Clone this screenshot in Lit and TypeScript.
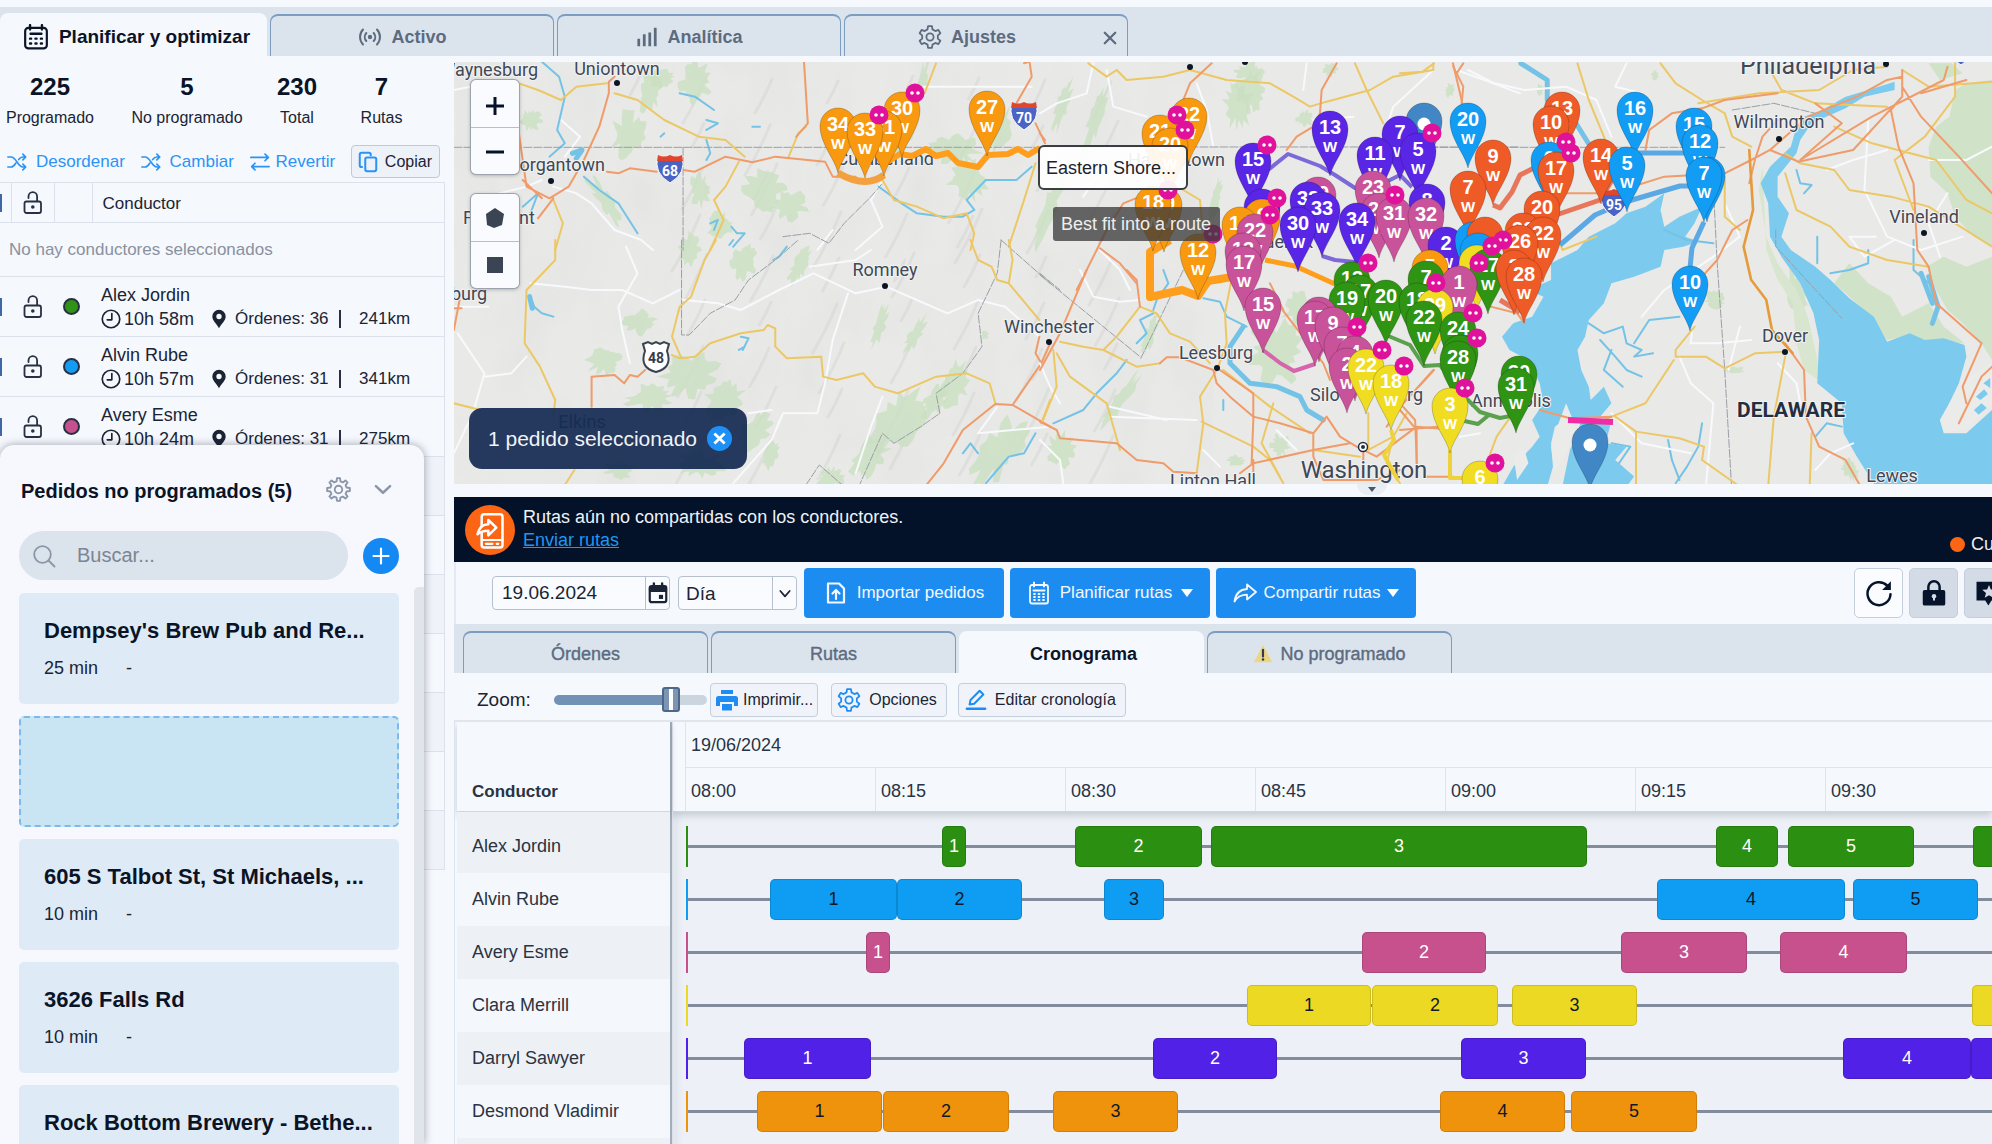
import { LitElement, html, css, svg, nothing } from "lit";
import { customElement, state } from "lit/decorators.js";
import { classMap } from "lit/directives/class-map.js";
import { styleMap } from "lit/directives/style-map.js";

/* ---------- icons ---------- */

const gearPath = (teeth: number, outer: number, inner: number) => {
  const pts: string[] = [];
  const step = (Math.PI * 2) / teeth;
  for (let i = 0; i < teeth; i++) {
    const a = i * step - Math.PI / 2;
    const put = (r: number, d: number) =>
      pts.push(`${(12 + r * Math.cos(a + d * step)).toFixed(2)} ${(12 + r * Math.sin(a + d * step)).toFixed(2)}`);
    put(inner, -0.3);
    put(outer, -0.17);
    put(outer, 0.17);
    put(inner, 0.3);
  }
  return `M${pts.join("L")}Z`;
};

const icon = (size: number, body: unknown, cls = "") =>
  html`<svg class="icon ${cls}" width=${size} height=${size} viewBox="0 0 24 24" aria-hidden="true">${body}</svg>`;

const gear = (size: number, teeth = 6) =>
  icon(size, svg`<path d=${gearPath(teeth, 11, 8)}/><circle cx="12" cy="12" r="3.6"/>`);
const calcIcon = icon(26, svg`<rect x="2" y="3.500" width="20" height="19" rx="3" stroke-width="2"/><path d="M6.500 1v4M17.500 1v4M7 9h10" stroke-width="2.200"/><path d="M6.500 13.500h1M11.500 13.500h1M16.500 13.500h1M6.500 18h1M11.500 18h1M16.500 18h1" stroke-width="2.200"/>`);
const liveIcon = icon(24, svg`<circle cx="12" cy="12" r="2.200" fill="currentColor" stroke="none"/><path d="M8.300 8a6 6 0 0 0 0 8M15.700 8a6 6 0 0 1 0 8M5 4.500a11 11 0 0 0 0 15M19 4.500a11 11 0 0 1 0 15" stroke-width="2"/>`);
const barsIcon = icon(22, svg`<path d="M3 22V14M9 22V9M15 22V7M21 22V2" stroke-width="3" stroke-linecap="butt"/>`);
const shuffleIcon = icon(20, svg`<path d="M1 6h4c6 0 8 12 14 12h3M1 18h4c2.500 0 4-2 5.500-4.500M14 9c1.500-2 3-3 5-3h3M19 2.500 22.500 6 19 9.500M19 14.500l3.500 3.500-3.500 3.500" stroke-width="2"/>`);
const swapIcon = icon(20, svg`<path d="M1 6.500h21M18 2.500l4 4-4 4M23 17.500H2M6 13.500l-4 4 4 4" stroke-width="2"/>`);
const copyIcon = icon(22, svg`<rect x="9" y="7" width="12" height="15" rx="2" stroke-width="2.200"/><path d="M5.500 17.500H5a2 2 0 0 1-2-2V4a2 2 0 0 1 2-2h8a2 2 0 0 1 2 2v.5" stroke-width="2.200"/>`);
const lockIcon = icon(24, svg`<rect x="3.500" y="10.500" width="16.500" height="11.500" rx="2"/><path d="M7.500 7V5.500a4.300 4.300 0 0 1 8.600 0V10"/><circle cx="11.800" cy="16" r="1.800" fill="currentColor" stroke="none"/>`);
const clockIcon = icon(20, svg`<circle cx="12" cy="12" r="10.500" stroke-width="2"/><path d="M13 5.500v7.500H7.500" stroke-width="2"/>`);
const pinIcon = icon(20, svg`<path d="M12 1a8 8 0 0 0-8 8c0 5 5 8.500 8 14 3-5.500 8-9 8-14a8 8 0 0 0-8-8zm0 4.800a3.200 3.200 0 1 1 0 6.400 3.200 3.200 0 0 1 0-6.400z" fill="currentColor" stroke="none"/>`);
const chevron = icon(20, svg`<path d="M3.500 8.500 12 16.500l8.500-8" stroke-width="3"/>`);
const searchIcon = icon(24, svg`<circle cx="10.500" cy="10.500" r="8.300"/><path d="m16.500 16.500 6 6"/>`);
const plusIcon = icon(20, svg`<path d="M12 3v18M3 12h18" stroke-width="2.600"/>`);
const closeIcon = icon(18, svg`<path d="m5 5 14 14M19 5 5 19" stroke-width="3"/>`);
const importIcon = icon(24, svg`<path d="M4 2.500h11l5 5v14H4z" stroke-width="2.200"/><path d="M12 18V9M8.500 12.500 12 9l3.500 3.500" stroke-width="2.200"/>`);
const planIcon = icon(24, svg`<rect x="3" y="4" width="18" height="18.500" rx="2"/><path d="M7 1.500v4M17 1.500v4M6.500 9.500h11" stroke-width="2"/><path d="M7 13h1M11.500 13h1M16 13h1M7 16h1M11.500 16h1M16 16h1M7 19h1M11.500 19h1M16 19h1"/>`);
const shareIcon = icon(24, svg`<path d="M14 3.500 23 11l-9 7.500v-4.800c-6 0-9.500 1.800-12.500 6.800C2.500 13 6.500 8.500 14 8z"/>`);
const calendarIcon = icon(22, svg`<path d="M3 6.500a2 2 0 0 1 2-2h14a2 2 0 0 1 2 2V20a2 2 0 0 1-2 2H5a2 2 0 0 1-2-2z" stroke-width="2.400"/><path d="M3 5h18v5H3z" fill="currentColor"/><path d="M7.500 1.500v4M16.500 1.500v4" stroke-width="2.600"/><path d="M13 14h4.500v4.500H13z" fill="currentColor" stroke="none"/>`);
const refreshIcon = icon(30, svg`<path d="M18.500 6A9.200 9.200 0 1 0 21.200 13" stroke-width="2"/><path d="M21.500 2.500v7H14.500z" fill="currentColor" stroke="none"/>`);
const lockSolid = icon(30, svg`<path d="M7.500 10V7a4.500 4.500 0 0 1 9 0v3" stroke-width="2"/><rect x="3" y="9.500" width="18" height="12.500" rx="1.500" fill="currentColor" stroke="none"/><circle cx="12" cy="14.500" r="1.800" fill="#d3dbe6" stroke="none"/><path d="M11.200 15h1.600v3h-1.600z" fill="#d3dbe6" stroke="none"/>`);
const reviewIcon = icon(30, svg`<path d="M2 3h20v15h-8l-2.500 4L9 18H2z" fill="currentColor" stroke="none"/><path d="m12 5.500 1.500 3.600 3.900.3-3 2.500 1 3.800-3.400-2-3.400 2 1-3.800-3-2.500 3.900-.3z" fill="#d3dbe6" stroke="none"/>`);
const printIcon = icon(24, svg`<path d="M6 2h12v4H6zM3.500 8h17A2.500 2.500 0 0 1 23 10.500V18h-4v-4H5v4H1v-7.500A2.500 2.500 0 0 1 3.500 8zM7 16h10v6.500H7z" fill="currentColor" stroke="none"/>`);
const editIcon = icon(22, svg`<path d="m5 17 1-5L16 2l4 4L10 16z" stroke-width="2.200"/><path d="M2 21.500h20" stroke-width="2.600"/>`);
const warnIcon = icon(20, svg`<path d="M12 1 23 22H1z" fill="#ecd685" stroke="none"/><path d="M12 7v8" stroke="#333c4d" stroke-width="2.600"/><circle cx="12" cy="18.500" r="1.500" fill="#333c4d" stroke="none"/>`);
const phoneIcon = icon(40, svg`<rect x="7" y="2.500" width="12.500" height="20" rx="1.500" stroke-width="1.500"/><path d="M7 18h12.500M9.500 20.300h4M16 20.300h1" stroke-width="1.300"/><path d="M4.500 14.500c1-4 3-6 6.500-6V6l4.800 4.600L11 15.200v-2.700c-3 0-4.800.6-6.500 2z" stroke-width="1.500" fill="#fb6514"/>`);

/* ---------- data ---------- */

const C = {
  orange: "#f8990f", violet: "#5a26e6", pink: "#c9539a", green: "#2f9414",
  yellow: "#f0dc20", sky: "#129cf4", red: "#ef5b27", steel: "#4187c6",
};

/* [tip x, tip y, colour, label], painted from back to front */
type Pin = [number, number, string, string];
const pins: Pin[] = [
  [902, 157, C.orange, "30"], [884, 176, C.orange, "31"], [838, 173, C.orange, "34"], [865, 178, C.orange, "33"],
  [987, 156, C.orange, "27"], [1189, 163, C.orange, "22"], [1160, 180, C.orange, "21"], [1170, 193, C.orange, "20"],
  [1164, 252, C.orange, "19"], [1153, 251, C.orange, "18"], [1198, 299, C.orange, "12"],
  [1424, 168, C.steel, ""], [1330, 176, C.violet, "13"], [1400, 181, C.violet, "7"], [1375, 202, C.violet, "11"],
  [1418, 198, C.violet, "5"], [1253, 208, C.violet, "15"], [1262, 254, C.violet, ""], [1318, 242, C.pink, "29"],
  [1308, 247, C.violet, "32"], [1373, 236, C.pink, "23"], [1427, 249, C.violet, "8"],
  [1322, 257, C.violet, "33"], [1298, 272, C.violet, "30"], [1379, 258, C.pink, "26"], [1357, 268, C.violet, "34"],
  [1394, 262, C.pink, "31"], [1426, 263, C.pink, "32"],
  [1262, 264, C.orange, "6"], [1240, 272, C.orange, "14"], [1255, 279, C.pink, "22"], [1243, 298, C.pink, "13"],
  [1244, 311, C.pink, "17"], [1263, 353, C.pink, "15"],
  [1468, 168, C.sky, "20"], [1493, 205, C.red, "9"], [1468, 236, C.red, "7"],
  [1562, 157, C.red, "13"], [1551, 171, C.red, "10"], [1549, 207, C.sky, "6"], [1556, 217, C.red, "17"],
  [1601, 204, C.red, "14"], [1635, 157, C.sky, "16"], [1627, 212, C.sky, "5"],
  [1694, 173, C.sky, "15"], [1700, 190, C.sky, "12"], [1707, 222, C.sky, ""], [1704, 222, C.sky, "7"], [1690, 331, C.sky, "10"],
  [1446, 292, C.violet, "2"], [1430, 315, C.orange, "5"],
  [1473, 287, C.sky, ""], [1485, 282, C.red, ""], [1478, 298, C.sky, ""], [1477, 310, C.yellow, ""],
  [1542, 256, C.red, "20"], [1523, 278, C.red, "30"], [1543, 282, C.red, "22"], [1520, 290, C.red, "26"],
  [1488, 314, C.green, "17"], [1514, 315, C.red, "2"], [1524, 323, C.red, "28"],
  [1352, 327, C.green, "13"], [1360, 340, C.green, "17"], [1347, 347, C.green, "19"], [1386, 345, C.green, "20"],
  [1426, 326, C.green, "7"], [1417, 348, C.green, "18"], [1459, 331, C.pink, "1"], [1435, 354, C.yellow, "29"],
  [1424, 366, C.green, "22"], [1458, 377, C.green, "24"], [1460, 400, C.green, ""], [1458, 406, C.green, "28"],
  [1319, 362, C.pink, ""], [1315, 366, C.pink, "17"], [1333, 372, C.pink, "9"], [1342, 392, C.pink, "7"],
  [1355, 401, C.pink, "4"], [1347, 413, C.pink, "2"], [1366, 414, C.yellow, "22"], [1391, 430, C.yellow, "18"],
  [1519, 421, C.green, "30"], [1516, 433, C.green, "31"], [1450, 453, C.yellow, "3"], [1480, 526, C.yellow, "6"],
  [1590, 489, C.steel, ""],
];

const badges = [
  [915, 93], [879, 115], [1177, 115], [1185, 130], [1168, 190], [1267, 145], [1277, 198], [1270, 215],
  [1213, 234], [1432, 133], [1395, 195], [1368, 263], [1479, 263], [1436, 283], [1357, 327], [1382, 350],
  [1404, 366], [1473, 313], [1477, 338], [1465, 388], [1495, 463], [1566, 142], [1571, 153], [1503, 240], [1492, 246],
];

/* [x, baseline, name, anchor, size class] */
const places: [number, number, string, string, string][] = [
  [538, 76, "Waynesburg", "end", ""], [617, 75, "Uniontown", "middle", ""], [605, 171, "Morgantown", "end", ""],
  [463, 224, "Fairmont", "start", ""], [487, 300, "Clarksburg", "end", ""], [885, 276, "Romney", "middle", ""],
  [1049, 333, "Winchester", "middle", ""], [1216, 359, "Leesburg", "middle", ""], [1310, 401, "Silo", "start", ""],
  [1423, 401, "rg", "end", ""], [1471, 407, "Annapolis", "start", ""], [1364, 478, "Washington", "middle", "big"],
  [1213, 487, "Linton Hall", "middle", ""], [1808, 74, "Philadelphia", "middle", "mid"], [1779, 128, "Wilmington", "middle", ""],
  [1924, 223, "Vineland", "middle", ""], [1785, 342, "Dover", "middle", ""], [1791, 417, "DELAWARE", "middle", "state"],
  [1892, 482, "Lewes", "middle", ""], [582, 428, "Elkins", "middle", ""], [1225, 166, "Hagerstown", "end", ""],
  [934, 165, "Cumberland", "end", ""], [1313, 248, "Frederick", "end", ""],
];
const dots = [[617, 83], [551, 181], [885, 286], [1049, 342], [1217, 368], [1886, 64], [1779, 139], [1924, 233], [1785, 352], [1190, 67], [1245, 62]];

/* wooded patches: [cx, cy, rx, ry, lean] */
const woods: number[][] = [
  [530, 120, 12, 12, 0], [650, 90, 12, 24, 10], [695, 82, 18, 24, 0], [628, 135, 18, 26, 10], [662, 78, 16, 10, 0],
  [700, 190, 12, 18, 0], [765, 190, 24, 22, 0], [790, 205, 20, 16, 0], [720, 225, 16, 14, 0], [605, 200, 8, 34, -35],
  [690, 250, 12, 18, 0], [745, 262, 14, 20, 20], [800, 265, 9, 22, 25], [905, 130, 10, 30, 20], [920, 90, 6, 36, 15],
  [955, 150, 28, 16, 0], [968, 180, 22, 22, 0], [1000, 130, 12, 26, 20], [640, 322, 18, 14, 0], [605, 360, 20, 18, 0],
  [690, 375, 34, 24, -20], [650, 398, 28, 14, 0], [725, 400, 20, 26, 30], [755, 432, 14, 26, 30], [880, 325, 6, 26, 18],
  [915, 335, 7, 24, 30], [900, 420, 24, 44, 35], [870, 455, 16, 28, 35], [955, 385, 16, 28, 20], [935, 400, 12, 24, 30],
  [830, 478, 14, 12, 0], [1000, 450, 20, 42, 35], [1062, 105, 7, 32, 18], [1095, 120, 7, 42, 18], [1050, 205, 8, 54, 22],
  [1238, 105, 16, 26, 0], [1252, 92, 16, 22, 0], [1250, 72, 16, 10, 0], [1305, 118, 10, 9, 0], [1215, 200, 6, 28, 14],
  [1275, 352, 30, 34, 0], [1300, 310, 18, 20, 30], [1120, 400, 7, 36, 35], [1060, 450, 16, 20, 0], [1330, 70, 8, 7, 0],
  [1150, 335, 6, 24, 20], [620, 470, 16, 10, 0], [700, 465, 26, 14, 0], [770, 455, 8, 18, 20], [1280, 445, 10, 12, 0],
  [1450, 90, 5, 8, 0], [1540, 90, 4, 7, 0], [1655, 75, 4, 6, 0], [1715, 300, 12, 10, 0], [1760, 410, 6, 6, 0],
  [1735, 370, 12, 4, 0], [1798, 300, 10, 36, -10], [1850, 470, 8, 14, -30], [1235, 460, 10, 6, 0], [985, 335, 4, 5, 0],
];

const blob = ([cx, cy, rx, ry, lean]: number[], seed: number) => {
  const n = 30;
  const rad = (lean * Math.PI) / 180;
  let s = seed * 7919 + 13;
  const pts: string[] = [];
  for (let i = 0; i < n; i++) {
    s = (s * 1103515245 + 12345) % 2147483648;
    const k = 0.5 + (s / 2147483648) * 0.6;
    const a = (i / n) * Math.PI * 2;
    const x = rx * k * Math.cos(a);
    const y = ry * k * Math.sin(a);
    pts.push(`${(cx + x * Math.cos(rad) - y * Math.sin(rad)).toFixed(1)} ${(cy + x * Math.sin(rad) + y * Math.cos(rad)).toFixed(1)}`);
  }
  return `M${pts.join("L")}Z`;
};

/* relief strokes that lean along the Appalachian ridges */
const ridges = Array.from({ length: 70 }, (_, i) => {
  const x = 640 + ((i * 137) % 480);
  const y = 75 + ((i * 89) % 400);
  const l = 20 + ((i * 31) % 38);
  return `M${x} ${y}q${-l * 0.2} ${l * 0.5} ${-l * 0.5} ${l}`;
}).join("");

interface Stop { n: string; from: number; to: number }
interface Route { name: string; color: string; dark?: boolean; stops: Stop[] }
const st = (n: string, from: number, to: number): Stop => ({ n, from, to });
/* stop positions are pixels from 08:00 */
const routes: Route[] = [
  { name: "Alex Jordin", color: "#2b8f11", stops: [st("1", 256, 280), st("2", 389, 516), st("3", 525, 901), st("4", 1030, 1092), st("5", 1102, 1228), st("", 1287, 1420)] },
  { name: "Alvin Rube", color: "#0e9df2", dark: true, stops: [st("1", 84, 211), st("2", 211, 336), st("3", 418, 478), st("4", 971, 1159), st("5", 1167, 1292)] },
  { name: "Avery Esme", color: "#c6518d", stops: [st("1", 180, 204), st("2", 676, 800), st("3", 935, 1061), st("4", 1094, 1221)] },
  { name: "Clara Merrill", color: "#ecd924", dark: true, stops: [st("1", 561, 685), st("2", 686, 812), st("3", 826, 951), st("", 1286, 1420)] },
  { name: "Darryl Sawyer", color: "#5121e8", stops: [st("1", 58, 185), st("2", 467, 591), st("3", 775, 900), st("4", 1157, 1285), st("", 1285, 1420)] },
  { name: "Desmond Vladimir", color: "#ee930b", dark: true, stops: [st("1", 71, 196), st("2", 197, 323), st("3", 367, 492), st("4", 754, 879), st("5", 885, 1011)] },
];

/* ---------- map ---------- */

@customElement("route-map")
class RouteMap extends LitElement {
  static styles = css`
    :host { display: block; position: relative; overflow: hidden; background: #e9e9e8; font-family: "Liberation Sans", Arial, sans-serif; }
    .canvas { display: block; width: 100%; height: 100%; }
    .road { fill: none; stroke-linejoin: round; stroke-linecap: round; }
    .road path { vector-effect: non-scaling-stroke; }
    .white { stroke: #f7f9fc; stroke-width: 2; }
    .yellow { stroke: #ecc765; stroke-width: 2; }
    .orange { stroke: #ef9b6a; stroke-width: 2; }
    .river { stroke: #74c3e6; stroke-width: 2; }
    .wide { stroke-width: 5; }
    .border { stroke: #9a9fa7; stroke-width: 1; stroke-dasharray: 8 2; }
    .wood { fill: #c9e0c0; opacity: .8; }
    .water { fill: #7ccbee; }
    .land { fill: #ebebea; }
    .shore { fill: #d9e6cf; }
    .ridge { fill: none; stroke: #9a9aa0; stroke-width: 3; opacity: .12; stroke-linecap: round; }
    .route { fill: none; stroke-linejoin: round; }
    .place { font-family: Roboto, "Liberation Sans", sans-serif; font-size: 18px; fill: #3f4857; stroke: #f2f2f1; stroke-width: 2px; paint-order: stroke; }
    .mid { font-size: 25px; }
    .big { font-size: 24px; }
    .state { font-size: 21px; font-weight: 700; fill: #252e40; }
    .pin-num { font-size: 20px; font-weight: 700; fill: #fff; text-anchor: middle; }
    .pin-w { font-size: 15px; font-weight: 700; fill: #fff; text-anchor: middle; }
    .shield { font-family: Roboto, sans-serif; font-size: 14px; font-weight: 700; text-anchor: middle; fill: #fff; }
    .shield-us { fill: #333c4a; }
    .controls { position: absolute; left: 17px; top: 18px; display: flex; flex-direction: column; gap: 20px; }
    .group { display: flex; flex-direction: column; width: 48px; background: #fafbfe; border-radius: 5px; box-shadow: 0 0 0 1px #9da3ac, 0 1px 4px #0005; }
    .group button { all: unset; box-sizing: border-box; height: 47px; display: grid; place-items: center; cursor: pointer; color: #06122a; }
    .group .near { padding-top: 5px; }
    .group button + button { border-top: 1px solid #b9bec8; }
    .toast { position: absolute; left: 15px; bottom: 15px; display: flex; align-items: center; gap: 10px; height: 61px; padding: 0 15px 0 19px; border-radius: 13px; background: #142b52ed; color: #f0f3f8; font-size: 21px; }
    .toast button { all: unset; width: 25px; height: 25px; border-radius: 50%; background: #1e90f5; display: grid; place-items: center; color: #fff; cursor: pointer; }
    .icon { fill: none; stroke: currentColor; display: block; }
    .tip { position: absolute; left: 584px; top: 83px; height: 45px; box-sizing: border-box; padding: 0 10px 0 6px; border: 2px solid #3a3d44; border-radius: 6px; background: #ffffffea; color: #1c222d; font-size: 18px; line-height: 43px; }
    .hint { position: absolute; left: 599px; top: 145px; height: 34px; padding: 0 9px 0 8px; border-radius: 3px; background: #3b3b3bc4; color: #eee; font-size: 18px; line-height: 34px; }
  `;

  private pin([x, y, color, label]: Pin) {
    return svg`<g transform="translate(${x} ${y})">
      <path d="M0 0C-3-14-18-29-18-47A18 18 0 1 1 18-47C18-29 3-14 0 0Z" fill=${color} stroke="#0003"/>
      ${label
        ? svg`<text class="pin-num" y="-42">${label}</text><text class="pin-w" y="-24">W</text>`
        : color === C.steel ? svg`<circle cy="-44" r="6.500" fill="#fff"/>` : nothing}
    </g>`;
  }

  private interstate(x: number, y: number, n: string) {
    return svg`<g transform="translate(${x} ${y})">
      <path d="M-12-12q6 3 12 0q6 3 12 0q5 17-12 27q-17-10-12-27z" fill="#4a64c4" stroke="#fff"/>
      <path d="M-12-13q6 3 12 0q6 3 12 0l1 6h-26z" fill="#e0452e"/>
      <text class="shield" y="8">${n}</text></g>`;
  }

  render() {
    return html`
      <svg class="canvas" viewBox="454 62 1538 422" preserveAspectRatio="xMinYMin slice" role="img" aria-label="Mapa de rutas">
        <defs>
          <filter id="relief" x="0" y="0" width="100%" height="100%">
            <feTurbulence type="fractalNoise" baseFrequency=".02 .012" numOctaves="3" seed="4"/>
            <feColorMatrix values="0 0 0 0 .55  0 0 0 0 .56  0 0 0 0 .58  .7 0 0 0 -.28"/>
          </filter>
        </defs>
        <rect x="454" y="62" width="1538" height="440" fill="#e9e9e7"/>
        <path d="M454 62h760l-140 440H454z" filter="url(#relief)" opacity=".35"/>
        <path class="ridge" d=${ridges}/>
        ${woods.map((w, i) => svg`<path class="wood" d=${blob(w, i + 1)}/>`)}

        <g transform="translate(1400 50) scale(.3776 .3333)">
          <path class="wood" d="M1568 90 1500 100 1470 120 1455 200 1420 230 1400 290 1405 380 1450 430 1470 500 1520 560 1568 590zM1395 650 1440 620 1500 650 1568 620V930L1540 880 1490 820 1450 780 1420 720zM1150 700 1190 640 1240 700 1300 740 1330 800 1400 760 1440 830 1495 880 1390 870 1330 860 1290 870 1250 800zM1400 40h60l30 30-60 20z"/>
          <path class="shore" d="M960 350 950 420 970 560 1000 640 1050 720 1080 800 1100 900 1120 1010 1170 1060 1120 1000 1070 960 1050 880 1040 760 1000 690 970 600z"/>
          <path class="water" d="M570 520 600 490 650 470 700 430 690 480 700 530 740 500 800 470 780 520 755 560 790 575 750 590 700 600 690 650 620 680 560 700 540 760 500 810 490 860 470 900 480 960 500 1010 505 1050 540 1010 560 1060 530 1100 440 1105 410 1130 400 1180 405 1250 390 1310H270L300 1250 350 1190 370 1160 350 1110 380 1060 370 1000 340 930 290 900 270 860 300 820 350 800 380 740 340 720 400 690 400 640 470 600 500 560z"/>
          <path class="water" d="M430 1310 450 1200 470 1150 480 1110 560 1110 545 1180 600 1190 570 1230 620 1280 600 1310z"/>
          <path class="land" d="M400 1190 420 1120 440 1060 465 1130 440 1210 410 1270zM300 1210 330 1200 340 1240 310 1290z"/>
          <path class="water" d="M1310 95 1240 120 1180 140 1110 185 1070 200 1050 230 1035 290 980 350 955 400 975 460 980 560 1010 620 1060 700 1095 790 1110 870 1105 1000 1170 1060 1175 1150 1210 1220 1260 1310H1568V1080L1500 1150 1440 1150 1430 1110 1450 1070 1480 1000 1500 920 1495 885 1440 865 1390 870 1350 850 1290 875 1255 800 1190 745 1140 690 1100 650 1035 600 1010 560 1030 490 1000 440 1000 380 1050 310 1060 270 1090 220 1180 175 1230 140 1310 120z"/>
          <path class="land" d="M1440 1145 1430 1110 1490 990 1568 940V1060L1500 1140z"/>
          <g class="road river">
            <path d="M500 820 540 850 590 830 600 880 640 900 620 920 670 910M530 870 570 920 600 960 640 980M560 900 540 960 590 1010M620 880 660 810 740 800M700 540 760 570 830 580M1050 360 1060 400 1090 405 1070 430M1140 670 1190 660 1240 640V600M1105 560v80M1360 570V660L1400 700M710 1170 720 1230 740 1290M800 1120 790 1190 760 1250 730 1300M1100 1160 1130 1120 1170 1130M560 1180 610 1190 580 1240" />
            <path class="wide" d="M320 40 390 90V150M455 200 510 300 590 330M1380 670 1410 760"/>
            <path class="wide" d="M1400 680 1425 770 1410 820"/>
          </g>
          <path d="M1520 1080l20-20 14 14-22 20zM1525 1040l22-22 10 14-20 18zM1545 1000l18-16v30z" class="water"/>
          <g class="road white">
            <path d="M180 60 250 100 330 120 440 110 520 150 560 260M600 40 570 110 640 130M860 460 900 560 830 620 700 720 640 800M780 760 770 880 840 880 930 870M740 920 770 1000 830 1060 810 1310M1240 210 1230 420 1290 560 1380 600 1490 560M1130 360 1200 330 1290 300M1400 330 1500 330 1568 290M1260 560 1190 560 1230 620 1310 570M900 830 870 960M1000 940 1050 1000 1060 1060M560 1090 640 1180 770 1210M1200 1180 1140 1210 1100 1260M1450 430 1400 520 1430 620"/>
          </g>
          <g class="road border"><path d="M0 292H860M825 300 840 640 860 960 878 1310M880 180 990 160 1100 190M995 540V590L1170 805"/></g>
          <g class="road yellow">
            <path d="M0 70 60 65 90 40M470 40 500 150 540 260 550 290M690 40 730 100 800 150 860 190 880 260 930 290M980 60 1010 120 1100 160 1290 170M790 160 950 130 1110 120 1200 60 1290 50M860 380V500L900 540M1150 230 1250 280 1420 330 1500 450 1568 490M1020 310 1060 340 1150 360 1190 420 1300 440 1400 470 1568 590M1020 370 1050 480 1140 530 1190 590 1290 630 1400 650M780 830 730 900V920L810 920 860 955 940 910 1020 905M725 930 650 1060 560 1100 500 1130M570 1100 625 1145V1310M625 1145 740 1165 805 1190 800 1230 900 1310M1020 920 990 1100 975 1310M1090 1150 1085 1310M1330 60 1400 110 1568 95M1470 40 1470 140 1390 260 1310 330 1360 480M420 560 430 600 520 560"/>
          </g>
          <g class="road orange">
            <path d="M140 40 155 110 165 160M650 300 660 240 720 190 800 175 860 150 1000 130M420 430 560 430 700 380 860 370 930 330 980 300 1080 200 1210 140 1290 90 1330 80M980 300 1055 335 1200 300 1330 140 1330 60M1060 330 1250 200 1440 90 1450 50M1330 140 1300 180 1320 290 1360 400 1370 600 1400 650 1420 760 1540 880 1490 1010 1500 1060M1330 110 1380 200 1480 320 1568 430M1380 130 1500 90M1000 210 960 260 940 330 925 400M1100 160 1170 220 1060 330M920 510 880 540 840 630 800 680M1480 1120 1540 980 1568 950M1020 880 1070 960 1075 1100 1110 1190 1180 1230 1220 1310M370 1080 450 1105 560 1100M240 770 310 790 330 820M50 1010 90 960M0 1060 40 1110 45 1250M0 1140 100 1130" />
          </g>
          <path class="road" stroke="#e79a3c" stroke-width="7" d="M925 300 935 480 910 590 930 690 970 750 985 840 1040 910"/>
        </g>

        <g transform="translate(450 0) scale(.3827 .3333)">
          <g class="road white"><path d="M10 270 100 250M290 360 340 410 300 470M60 600 200 560 240 540M270 560 330 580 370 610 430 690 500 720 530 750M1130 540 1100 600 1130 680 1060 750M1210 260H1520M960 750 1000 690"/></g>
          <g class="road river"><path d="M240 185 285 230 300 290 280 390 300 430 260 470M350 530 390 570 440 610 490 700M640 290 600 280M640 290 690 330M670 360 700 370 670 390M670 420 680 460 670 480M560 400 550 410M790 380 810 380M680 670 700 660 690 690M735 680 750 700 770 700 740 740M190 620 230 580 210 640M1520 500 1480 540 1400 540 1350 600 1370 630 1340 650 1290 650 1220 640 1180 610 1120 560" /><path class="wide" d="M320 460 345 450 330 475"/></g>
          <g class="road border"><path d="M10 442H1560M609 442V750M870 710 940 700 990 730 1030 670 1100 590 1130 550"/></g>
          <g class="road yellow"><path d="M180 250 230 270 290 300 330 260 410 250M430 280 490 300 560 360 650 410 720 420 770 470M885 470 910 400 930 380M1240 280 1270 190M755 485 720 560 690 600 715 660 680 750M270 600 295 670 275 750M1130 540 1160 600 1220 620 1290 655 1350 640 1370 700 1360 750M1530 490 1500 600 1460 740"/></g>
          <g class="road orange"><path d="M430 230 415 245 415 280 390 380 350 480 310 560 260 595 200 560 180 400M240 595 190 540M270 595 230 655M410 515 440 520 470 505 540 515M610 510 640 515 720 470 790 487 850 470 980 485 1000 530 1060 530M925 185 935 370 905 410M1515 190 1520 230 1480 310M1530 370 1555 430M1515 185 1500 190"/></g>
        </g>

        <g transform="translate(450 240) scale(.3827 .3333)">
          <g class="road white"><path d="M10 200 100 200M20 280 90 400 60 520 10 640M210 130 300 140 370 150 450 150 530 190 600 150M460 20 490 100 440 200 450 270 470 370M90 410 160 400 200 350M610 180 700 190 760 210 860 150 950 100 1060 160 1140 140 1220 180 1300 220 1380 180 1450 200 1540 290M940 80 1060 60 1100 30M1040 160 1000 300 980 430 960 520 870 520 840 600 740 730M1130 470 1100 560 1060 700M1430 500 1380 580 1568 560M780 520 840 510"/></g>
          <g class="road river"><path d="M210 170 220 200 240 220 270 230M730 15 740 0M845 60 860 50 880 20M760 290 780 295 765 330M755 330 770 320" /><path d="M1340 640 1360 610 1380 640M1400 730 1430 690 1460 650 1500 640 1530 580"/><path class="wide" d="M208 170 215 205"/></g>
          <g class="road border"><path d="M605 0V285L625 285 680 220 745 180 780 120 850 60 910 0M1440 0 1430 100 1380 220 1390 320 1340 400 1270 460 1280 520 1230 560 1160 610 1130 580 1070 735M930 735 965 675 1030 740M1440 0 1568 130"/></g>
          <g class="road yellow"><path d="M275 0V60L200 150 195 310 235 380 275 480 270 530M695 0 665 60 630 170 600 200 580 290 605 355 640 350 680 310 760 280 820 270 830 255 850 265V320L880 355 970 350 975 410 1010 420 1080 400 1110 440 1170 460 1270 410 1350 400 1410 430 1425 490M1360 0 1380 60 1415 80 1430 120 1460 130 1540 240M1460 0 1470 60 1460 130M10 490 80 510M325 690 300 735M1568 480 1545 550M600 355 580 345"/></g>
          <g class="road orange"><path d="M370 500 370 410 430 405 455 430 470 405 490 410 510 390M10 270 25 180M10 205H30M1568 310 1545 370 1470 495 1425 492 1340 570 1290 670 1245 735M1470 495 1568 560M1540 290 1530 340 1545 370"/></g>
        </g>

        <g transform="translate(1040 50) scale(.3333)">
          <g class="road white"><path d="M160 40 140 130 50 160 0 190M200 60 220 170 320 200M470 100 500 180 520 290M800 40 790 120M1250 60 1360 100 1440 130M1180 60 1060 170 1040 230M940 200 820 210M560 500 620 470M130 440 190 350M180 600 240 660 270 720"/></g>
          <g class="road border"><path d="M0 291H1440M0 670 60 720"/></g>
          <g class="road yellow"><path d="M145 40 200 80 230 60 260 90 370 80 450 60 560 90 690 100 760 140 810 170 860 155 990 120 1060 80 1180 60M945 40 980 120 1030 220M430 420 480 450 490 560M1180 60 1180 40"/></g>
          <g class="road orange"><path d="M515 40 450 100 430 150M890 40 845 120 840 190 820 230 770 260 740 300M0 250 15 270M300 440 250 460 200 540 170 600 110 720M180 595 240 640 290 700M1240 50 1270 110 1265 160M1270 40 1250 70"/></g>
        </g>
        <g transform="translate(1040 270) scale(.3333)">
          <g class="road white"><path d="M120 0 160 80 240 95 300 90M0 280 30 350 60 400M210 410 380 450M470 450 210 440M0 510 60 570 70 640M540 590 490 540M1320 490 1260 500M710 480 770 540"/></g>
          <g class="road river"><path d="M340 130 300 150 320 190 290 220M260 270 230 310 170 370 130 420 40 460M370 0 385 40 350 90 340 120M550 390V420" /><path d="M490 85 540 95 560 140 620 170" /><path class="wide" d="M610 170 570 230 570 280 630 340 710 350 780 380 800 420 850 450" /></g>
          <g class="road border"><path d="M0 15 300 260M430 0 300 270"/></g>
          <g class="road yellow"><path d="M60 215 130 230 190 240 290 290 360 280M190 240 230 200 300 110 350 130 390 190 450 215 510 280M40 240 50 350 5 460M50 250 90 320 200 400 240 540M580 0 555 130 560 220 535 290M530 300 480 380 490 460 470 610M550 300 690 410 810 490M485 455 640 530 690 570 730 640M700 400 665 520 720 620M1340 580 1370 500 1440 400M820 540 960 560M985 430V540L1060 500 1040 580 1080 640M1060 500 1100 430"/></g>
          <g class="road orange"><path d="M140 0 60 190 0 300M260 0 290 30 300 110M360 280 380 262 420 262 520 300 530 340 570 380 640 440 720 460 820 490M540 300 640 370 640 450 635 580M0 455 50 480 60 505 230 520 290 570 370 580 400 605 470 610M640 580 820 540 930 520M640 580 600 610M820 490 860 440 900 500 950 530M820 490V560L850 630H1010L1080 600M640 570 640 640M950 530 1010 560 1130 470 1250 480M1080 420 1130 480V580M970 540V630M1160 620H1240M720 110 850 280 870 330M690 40 730 120M1040 470 1090 400 1180 300"/></g>
        </g>

        ${dots.map(([x, y]) => svg`<circle cx=${x} cy=${y} r="3" fill="#0c1526"/>`)}
        <circle cx="1363" cy="447" r="4.500" fill="#fff" stroke="#252e40" stroke-width="1.500"/><circle cx="1363" cy="447" r="2" fill="#252e40"/>
        ${places.map(([x, y, name, anchor, cls]) => svg`<text class="place ${cls}" x=${x} y=${y} text-anchor=${anchor}>${name}</text>`)}

        <g class="route">
          <path stroke="#f3a03f" stroke-width="7" d="M838 173q28 16 46 2"/>
          <path stroke="#ff9d1c" stroke-width="6" d="M884 164 900 154 912 156 926 149 936 156 948 153 958 163 978 167 988 155 1008 154 1018 149 1028 155 1040 148"/>
          <path stroke="#ff9d1c" stroke-width="8" d="M1170 240 1150 252V297L1182 290 1198 296 1208 281 1232 277"/>
          <path stroke="#ff9d1c" stroke-width="5" d="M1265 260 1295 266 1335 284"/>
          <path stroke="#7c68d8" stroke-width="4" d="M1258 178 1288 154 1320 166 1335 175 1355 188 1378 186 1400 175 1412 187M1322 256 1335 260 1355 262"/>
          <path stroke="#d566ab" stroke-width="4" d="M1263 350 1280 363 1294 371 1315 364"/>
          <path stroke="#5aa04e" stroke-width="4" d="M1386 335 1410 345 1424 366 1440 365 1460 392 1480 412 1500 418 1516 415M1460 420 1478 424 1490 414"/>
          <path stroke="#e8765a" stroke-width="5" d="M1493 205 1500 208 1512 192 1520 175 1540 165M1556 215 1600 200 1612 180M1500 300 1520 312"/>
          <path stroke="#5aa9e4" stroke-width="5" d="M1630 153H1700M1560 245 1595 215 1625 202 1680 186 1704 186M1704 222 1692 248 1690 268"/>
          <path stroke="#eed23c" stroke-width="4" d="M1391 430 1394 440 1384 455 1398 480M1450 450V478L1470 478"/>
        </g>

        ${this.interstate(1024, 115, "70")}${this.interstate(670, 168, "68")}${this.interstate(1614, 202, "95")}${this.interstate(1961, 50, "")}
        <g transform="translate(656 356)"><path d="M-13-12 -8-14 -4-12 0-14 4-12 8-14 13-12 11-5Q17 12 0 16Q-17 12-11-5Z" fill="#fff" stroke="#3a4350" stroke-width="2"/><text class="shield shield-us" y="7">48</text></g>

        ${pins.map((p) => this.pin(p))}
        ${badges.map(([x, y]) => svg`<g transform="translate(${x} ${y})"><circle r="9.500" fill="#e0119b"/><circle cx="-3" r="1.800" fill="#fff"/><circle cx="3" r="1.800" fill="#fff"/></g>`)}
        <path d="M1568 420 1613 422" stroke="#ef2ba6" stroke-width="6"/>
      </svg>
      <div class="tip">Eastern Shore...</div>
      <div class="hint">Best fit into a route</div>
      <div class="controls">
        <div class="group">
          <button class="near" aria-label="Acercar"><svg class="icon" width="20" height="20" viewBox="0 0 20 20"><path d="M10 1v18M1 10h18" stroke-width="3"/></svg></button>
          <button aria-label="Alejar"><svg class="icon" width="20" height="20" viewBox="0 0 20 20"><path d="M1 11h18" stroke-width="3"/></svg></button>
        </div>
        <div class="group">
          <button aria-label="Seleccionar con polígono"><svg width="20" height="20" viewBox="0 0 20 20"><path d="M10 0 19 6 17 17 9 20 2 17 1 6z" fill="#3b4452"/></svg></button>
          <button aria-label="Seleccionar con rectángulo"><svg width="16" height="16" viewBox="0 0 16 16"><path d="M0 0h16v16H0z" fill="#3b4452"/></svg></button>
        </div>
      </div>
      <div class="toast"><span>1 pedido seleccionado</span><button aria-label="Quitar selección"><svg class="icon" width="13" height="13" viewBox="0 0 14 14"><path d="m1.500 1.500 11 11M12.500 1.500l-11 11" stroke-width="3"/></svg></button></div>
    `;
  }
}

/* ---------- shared styles ---------- */

const base = css`
  * { box-sizing: border-box; }
  .icon { fill: none; stroke: currentColor; stroke-width: 1.8; stroke-linecap: round; stroke-linejoin: round; flex: none; display: block; }
  button { font: inherit; color: inherit; background: none; border: 0; padding: 0; margin: 0; cursor: pointer; }
`;

/* ---------- planning side panel ---------- */

@customElement("plan-panel")
class PlanPanel extends LitElement {
  static styles = [base, css`
    :host { display: block; position: relative; overflow: hidden; min-height: 0; background: #f5f8fd; font-family: "Liberation Sans", Arial, sans-serif; font-size: 16px; color: #1b2434; }
    .stats { display: grid; grid-template-columns: 100px 174px 46px 1fr; margin: 0; padding-top: 16px; text-align: center; }
    .stats div { display: flex; flex-direction: column-reverse; }
    .stats dt { line-height: 24px; white-space: nowrap; margin-top: 4px; }
    .stats dd { margin: 0; font-size: 24px; font-weight: 700; line-height: 30px; color: #0b1426; }
    .stats .last { padding-right: 11px; }
    .actions { display: flex; align-items: center; justify-content: space-between; padding: 15px 14px 4px 7px; color: #2c93f5; }
    .actions button { display: flex; align-items: center; gap: 9px; height: 33px; font-size: 17px; }
    .actions .swap { gap: 6px; }
    .actions .copy { border: 1px solid #bfcad9; border-radius: 4px; background: #edf1f8; padding: 0 7px 0 5px; gap: 6px; font-size: 16px; color: #1b2434; }
    .copy .icon { color: #2c93f5; }
    table { width: 445px; border-collapse: collapse; table-layout: fixed; border-right: 1px solid #dbe2ec; }
    th, td { padding: 0; font-weight: 400; text-align: left; border-bottom: 1px solid #dbe2ec; }
    thead th { height: 40px; border: 1px solid #dbe2ec; border-left: 0; font-size: 17px; }
    thead .name { padding: 2px 0 0 10px; }
    .pick { width: 11px; } .lock { width: 43px; } .dotcol { width: 38px; }
    .pick input { appearance: none; display: block; margin: 0 0 0 -14px; width: 16px; height: 18px; border: 2px solid #4068a8; background: #fff; }
    .lock .icon { margin: 0 auto; color: #273143; }
    .none td { height: 54px; padding-left: 9px; color: #8a919e; font-size: 17px; }
    .driver td { height: 60px; }
    .dot { width: 17px; height: 17px; border-radius: 50%; border: 2px solid #273143; margin-left: 9px; }
    .driver .who { padding: 3px 0 0 9px; font-size: 18px; line-height: 22px; }
    .meta { display: flex; align-items: center; line-height: 26px; white-space: nowrap; }
    .meta .time { margin-left: 3px; width: 85px; }
    .meta .orders { font-size: 17px; margin-left: 6px; width: 104px; }
    .meta .bar { width: 2px; height: 18px; background: #273143; }
    .meta .km { font-size: 17px; margin-left: 18px; }
    .meta .icon { color: #1b2434; }
    .filler td { height: 59px; }
    .filler:nth-child(odd) { background: #eff2f8; }

    .sheet { position: absolute; left: 0; right: 30px; top: 389px; bottom: 0; display: flex; flex-direction: column; background: #f6f8fd; border-radius: 14px 14px 0 0; box-shadow: 0 0 8px #1b243466; overflow: hidden; }
    .sheet header { display: flex; align-items: center; padding: 31px 31px 0 21px; height: 61px; color: #0b1426; }
    .sheet h2 { flex: 1; margin: 0; font-size: 20px; line-height: 30px; white-space: nowrap; }
    .sheet header button { color: #8b97a8; margin: 0 0 4px 22px; }
    .find { display: flex; align-items: center; justify-content: space-between; padding: 25px 25px 0 19px; }
    .search { display: flex; align-items: center; gap: 21px; width: 329px; height: 49px; padding: 0 13px; border-radius: 25px; background: #dbe3ec; color: #8b97a8; }
    .search input { flex: 1; min-width: 0; border: 0; outline: 0; background: none; font: inherit; font-size: 20px; color: #1b2434; padding: 0; }
    .search input::placeholder { color: #7c8591; opacity: 1; }
    .add { width: 36px; height: 36px; border-radius: 50%; background: #1488f3; color: #fff; display: grid; place-items: center; }
    .list { flex: 1; min-height: 0; overflow: hidden; display: grid; grid-template-columns: 1fr 10px; margin-top: 7px; }
    .list ul { list-style: none; margin: 0; padding: 6px 15px 0 19px; display: flex; flex-direction: column; gap: 12px; min-width: 0; height: 0; }
    .track { background: #e0e4eb; border-radius: 5px 0 0 0; }
    .card { flex: none; height: 111px; border-radius: 5px; background: #deebf6; padding: 24px 20px 0 25px; }
    .card h3 { margin: 0; font-size: 22px; line-height: 28px; color: #0b1426; white-space: nowrap; }
    .card p { margin: 11px 0 0; font-size: 18px; line-height: 24px; display: flex; gap: 28px; }
    .drop { background: #c9e5f4; border: 2px dashed #7db9ec; }
  `];

  private drivers = [
    { name: "Alex Jordin", color: "#2f9414", time: "10h 58m", orders: 36, km: 241 },
    { name: "Alvin Rube", color: "#129cf4", time: "10h 57m", orders: 31, km: 341 },
    { name: "Avery Esme", color: "#c9508f", time: "10h 24m", orders: 31, km: 275 },
  ];

  private orders = [
    { title: "Dempsey's Brew Pub and Re...", time: "25 min" },
    null,
    { title: "605 S Talbot St, St Michaels, ...", time: "10 min" },
    { title: "3626 Falls Rd", time: "10 min" },
    { title: "Rock Bottom Brewery - Bethe...", time: "10 min" },
  ];

  render() {
    return html`
      <dl class="stats">
        <div><dt>Programado</dt><dd>225</dd></div>
        <div><dt>No programado</dt><dd>5</dd></div>
        <div><dt>Total</dt><dd>230</dd></div>
        <div class="last"><dt>Rutas</dt><dd>7</dd></div>
      </dl>
      <div class="actions">
        <button>${shuffleIcon}Desordenar</button>
        <button>${shuffleIcon}Cambiar</button>
        <button class="swap">${swapIcon}Revertir</button>
        <button class="copy">${copyIcon}Copiar</button>
      </div>
      <table>
        <thead><tr>
          <th class="pick"><input type="checkbox" aria-label="Seleccionar todos"></th>
          <th class="lock">${lockIcon}</th><th class="dotcol"></th><th class="name">Conductor</th>
        </tr></thead>
        <tbody>
          <tr class="none"><td colspan="4">No hay conductores seleccionados</td></tr>
          ${this.drivers.map((d) => html`<tr class="driver">
            <td class="pick"><input type="checkbox" aria-label=${d.name}></td>
            <td class="lock">${lockIcon}</td>
            <td><div class="dot" style=${styleMap({ background: d.color })}></div></td>
            <td class="who">${d.name}
              <div class="meta">${clockIcon}<span class="time">${d.time}</span>${pinIcon}<span class="orders">Órdenes: ${d.orders}</span><span class="bar"></span><span class="km">${d.km}km</span></div>
            </td></tr>`)}
          ${[1, 2, 3, 4, 5, 6, 7].map(() => html`<tr class="filler"><td colspan="4"></td></tr>`)}
        </tbody>
      </table>
      <section class="sheet">
        <header><h2>Pedidos no programados (5)</h2>
          <button aria-label="Configurar">${gear(25, 8)}</button><button aria-label="Contraer">${chevron}</button></header>
        <div class="find">
          <label class="search">${searchIcon}<input type="search" placeholder="Buscar..." aria-label="Buscar"></label>
          <button class="add" aria-label="Añadir pedido">${plusIcon}</button>
        </div>
        <div class="list">
          <ul>${this.orders.map((o) => o
            ? html`<li class="card"><h3>${o.title}</h3><p><span>${o.time}</span><span>-</span></p></li>`
            : html`<li class="card drop"></li>`)}</ul>
          <div class="track"></div>
        </div>
      </section>`;
  }
}

/* ---------- schedule ---------- */

@customElement("route-schedule")
class RouteSchedule extends LitElement {
  static styles = [base, css`
    :host { display: grid; grid-template-columns: 215px 1fr; min-height: 0; overflow: hidden; border-top: 2px solid #dfe6ee; padding-left: 2px; font-family: "Liberation Sans", Arial, sans-serif; font-size: 18px; color: #2a3342; }
    .names { border-right: 2px solid #a3adbb; background: #f4f7fc; z-index: 1; }
    .head { height: 90px; border-bottom: 1px solid #cfd6df; box-shadow: 0 3px 8px #1b243433; background: #f5f8fd; }
    .names .head { display: flex; align-items: flex-end; padding: 0 0 8px 15px; font-size: 17px; font-weight: 700; line-height: 22px; }
    .names ul, .rows { list-style: none; margin: 0; padding: 0; }
    .names ul { border-top: 8px solid #edf1f6; }
    .names li { height: 53px; line-height: 53px; padding-left: 15px; }
    .names li:nth-child(odd) { background: #edf1f6; }
    .time { overflow: hidden; background: #edf1f7; border-left: 1px solid #dbe1ea; box-shadow: inset 6px 0 6px #1b24340d; padding-left: 13px; }
    .time .head { margin-left: -14px; padding-left: 13px; }
    .date { height: 46px; line-height: 46px; padding-left: 5px; border-left: 1px solid #dfe4ec; border-bottom: 1px solid #dfe4ec; }
    .hours { display: flex; }
    .hours span { flex: none; width: 190px; height: 43px; line-height: 46px; padding-left: 5px; border-left: 1px solid #dfe4ec; }
    .rows { padding-top: 8px; }
    .rows li { position: relative; height: 53px; }
    .rows .edge { position: absolute; left: 0; top: 6px; width: 2px; height: 41px; }
    .rows .line { position: absolute; left: 2px; right: 0; top: 25px; height: 3px; background: #828c9c; }
    .stop { position: absolute; top: 6px; height: 41px; border-radius: 5px; border: 1px solid #0002; color: #fff; text-align: center; }
    .dark .stop { color: #10182a; }
  `];
  render() {
    return html`
      <div class="names"><div class="head">Conductor</div>
        <ul>${routes.map((r) => html`<li>${r.name}</li>`)}<li></li></ul></div>
      <div class="time">
        <div class="head"><div class="date">19/06/2024</div>
          <div class="hours">${["08:00", "08:15", "08:30", "08:45", "09:00", "09:15", "09:30"].map((h) => html`<span>${h}</span>`)}</div></div>
        <ul class="rows">${routes.map((r) => html`<li class=${classMap({ dark: !!r.dark })}>
          <span class="edge" style=${styleMap({ background: r.color })}></span><span class="line"></span>
          ${r.stops.map((s) => html`<button class="stop" style=${styleMap({ left: `${s.from}px`, width: `${s.to - s.from}px`, background: r.color })}>${s.n}</button>`)}
        </li>`)}</ul>
      </div>`;
  }
}

/* ---------- page ---------- */

@customElement("app-root")
class AppRoot extends LitElement {
  static styles = [base, css`
    :host { display: grid; grid-template-rows: 56px minmax(0, 1fr); height: 100vh; overflow: hidden; background: #f5f8fd; font-family: "Liberation Sans", Arial, sans-serif; font-size: 18px; color: #1b2434; }
    .tabs { display: flex; gap: 3px; background: #dbe4ed; }
    .tab { display: flex; align-items: center; justify-content: center; gap: 9px; border: 1px solid #7c9cc0; border-top-width: 2px; border-bottom: 0; border-radius: 8px 8px 0 0; color: #5d6b7f; font-weight: 700; }
    .tab.on { background: #f5f8fd; border-color: transparent; color: #0b1426; }
    .main { border-top: 7px solid #f5f8fd; padding-top: 7px; }
    .main .tab { width: 284px; position: relative; padding: 2px 19px 0 0; }
    .main .tab.on { width: 267px; font-size: 19px; gap: 10px; margin-top: -1px; padding: 2px 0 0 6px; }
    .main .closable { padding-right: 38px; }
    .tab button { display: flex; align-items: center; gap: inherit; }
    .tab .x { position: absolute; right: 8px; top: 13px; }
    .body { display: grid; grid-template-columns: 454px minmax(0, 1fr); min-height: 0; }
    .work { display: flex; flex-direction: column; min-width: 0; min-height: 0; padding-top: 6px; }
    route-map { flex: none; height: 422px; }
    .split { flex: none; height: 13px; display: flex; justify-content: center; padding-left: 298px; }
    .split button { width: 30px; height: 11px; background: #e9edf4; border-radius: 0 0 14px 14px; display: grid; place-items: center; }
    .banner { flex: none; display: flex; align-items: center; gap: 8px; height: 65px; padding: 0 0 0 11px; background: #031229; color: #eef2f8; }
    .badge { flex: none; width: 50px; height: 50px; border-radius: 50%; background: #fb6514; color: #fff; display: grid; place-items: center; }
    .msg { flex: 1; line-height: 23px; padding-bottom: 1px; }
    .msg a { color: #2196ef; }
    .msg p { margin: 0; }
    .flag { display: flex; align-items: center; gap: 6px; width: 42px; overflow: hidden; padding-top: 30px; }
    .flag i { flex: none; width: 15px; height: 15px; border-radius: 50%; background: #fb6514; }
    .tools { flex: none; display: flex; align-items: center; gap: 6px; height: 62px; padding-left: 36px; border-left: 2px solid #e3eaf3; overflow: hidden; }
    .field { display: flex; align-items: center; height: 34px; border: 1px solid #b7c1ce; border-radius: 4px; background: #f9fbfe; margin-right: 2px; }
    .field input, .field select { border: 0; background: none; font: inherit; font-size: 19px; color: inherit; padding: 0 0 0 9px; height: 32px; outline: 0; appearance: none; min-width: 0; }
    .field input { width: 152px; }
    .field select { width: 93px; padding-left: 7px; }
    .field .end { display: grid; place-items: center; align-self: stretch; width: 24px; border-left: 1px solid #b7c1ce; }
    .day { margin-right: 1px; }
    .cta { display: flex; align-items: center; justify-content: center; gap: 9px; height: 50px; border-radius: 4px; background: #1d8cf0; color: #f4f8fe; width: 200px; font-size: 17px; }
    .cta .caret { width: 0; border: 6px solid transparent; border-top: 8px solid #fff; border-bottom: 0; }
    .cta.share { gap: 6px; }
    .space { flex: 1; }
    .sq { flex: none; width: 49px; height: 50px; display: grid; place-items: center; border: 1px solid #c5cedb; border-radius: 5px; background: #d3dbe6; color: #06142b; }
    .sq.plain { background: #fbfcff; }
    .cut { margin-right: -21px; }
    .sub { flex: none; height: 49px; padding: 7px 0 0 9px; }
    .sub .tab { width: 245px; font-weight: 400; gap: 7px; padding-top: 2px; }
    .sub .tab.on { font-weight: 700; padding-left: 4px; }
    .sub .tab:not(.on) button { -webkit-text-stroke: .4px; }
    .bar { flex: none; display: flex; align-items: center; height: 47px; padding: 7px 0 0 23px; }
    .bar label { width: 77px; font-size: 19px; }
    .bar input { appearance: none; width: 153px; height: 25px; margin: 0 3px 0 0; background: none; }
    .bar input::-webkit-slider-runnable-track { height: 10px; border-radius: 5px; background: linear-gradient(90deg, #7292b5 0 75%, #cbd5e0 75%); }
    .bar input::-webkit-slider-thumb { appearance: none; width: 18px; height: 25px; margin-top: -8px; border: 2px solid #4d6788; border-radius: 3px; background: linear-gradient(90deg, #7b95b3 0 5px, #fff 5px 9px, #7b95b3 9px); }
    .bar button { display: flex; align-items: center; gap: 8px; height: 34px; padding: 0 9px 0 6px; border: 1px solid #c3cedc; border-radius: 4px; background: #f0f4fa; font-size: 16px; }
    .bar .print { gap: 4px; padding: 0 4px; margin-right: 13px; }
    .bar .opts { margin-right: 11px; padding-left: 5px; }
    .bar button .icon { color: #1e8cf2; }
    route-schedule { flex: 1; border-left: 1px solid #dbe4ee; }
  `];

  @state() private view = "Cronograma";

  render() {
    const sub = ["Órdenes", "Rutas", "Cronograma", "No programado"];
    return html`
      <nav class="tabs main">
        <div class="tab on"><button>${calcIcon}Planificar y optimizar</button></div>
        <div class="tab"><button>${liveIcon}Activo</button></div>
        <div class="tab"><button>${barsIcon}Analítica</button></div>
        <div class="tab closable"><button>${gear(24)}Ajustes</button><button class="x" aria-label="Cerrar">${closeIcon}</button></div>
      </nav>
      <div class="body">
        <plan-panel></plan-panel>
        <main class="work">
          <route-map></route-map>
          <div class="split"><button aria-label="Redimensionar"><svg width="8" height="5" viewBox="0 0 8 5"><path d="M0 0h8L4 5z" fill="#4b5666"/></svg></button></div>
          <div class="banner"><span class="badge">${phoneIcon}</span>
            <div class="msg"><p>Rutas aún no compartidas con los conductores.</p><a href="#enviar">Enviar rutas</a></div>
            <span class="flag"><i></i>Cu</span></div>
          <div class="tools">
            <span class="field"><input aria-label="Fecha" value="19.06.2024"><button class="end" aria-label="Abrir calendario">${calendarIcon}</button></span>
            <span class="field day"><select aria-label="Periodo"><option>Día</option></select><span class="end">${icon(16, svg`<path d="m5 9 7 8 7-8" stroke-width="2.600"/>`)}</span></span>
            <button class="cta">${importIcon}Importar pedidos</button>
            <button class="cta">${planIcon}Planificar rutas<span class="caret"></span></button>
            <button class="cta share">${shareIcon}Compartir rutas<span class="caret"></span></button>
            <span class="space"></span>
            <button class="sq plain" aria-label="Actualizar">${refreshIcon}</button>
            <button class="sq" aria-label="Bloquear">${lockSolid}</button>
            <button class="sq cut" aria-label="Valoraciones">${reviewIcon}</button>
          </div>
          <div class="tabs sub">${sub.map((s) => html`<div class=${classMap({ tab: true, on: this.view === s })}>
            <button @click=${() => (this.view = s)}>${s === "No programado" ? warnIcon : nothing}${s}</button></div>`)}</div>
          <div class="bar"><label for="zoom">Zoom:</label><input id="zoom" type="range" min="0" max="100" value="80">
            <button class="print">${printIcon}Imprimir...</button>
            <button class="opts">${gear(24)}Opciones</button>
            <button>${editIcon}Editar cronología</button></div>
          <route-schedule></route-schedule>
        </main>
      </div>`;
  }
}
